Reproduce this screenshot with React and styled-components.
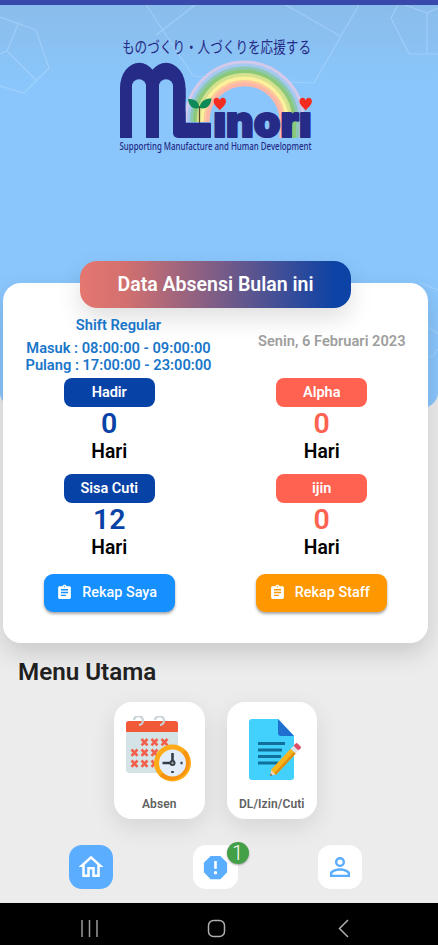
import React from "react";
import styled, { createGlobalStyle } from "styled-components";
import { MdAssignment, MdOutlineHome, MdReport, MdPersonOutline } from "react-icons/md";

const GlobalStyle = createGlobalStyle`
  *, *::before, *::after { box-sizing: border-box; }
  body { margin: 0; background: #ececec; font-family: Roboto, "Noto Sans CJK JP", sans-serif; }
  svg { display: block; flex: none; }
`;

const Screen = styled.div`
  position: relative;
  width: 438px;
  height: 945px;
  overflow: hidden;
  display: flex;
  flex-direction: column;
  background: #ececec;
`;

const StatusBar = styled.div`
  height: 5px;
  flex: none;
  background: #3949ab;
  z-index: 1;
`;

const Backdrop = styled.div`
  position: absolute;
  inset: 0 0 auto 0;
  height: 409px;
  overflow: hidden;
  border-radius: 0 0 20px 20px / 0 0 16px 16px;
  background: linear-gradient(#8abcea 0, #8ac0f0 35px, #8ac6fb 80px, #8ac6fd 100%);
`;

const Hero = styled.header`
  height: 256px;
  flex: none;
  padding: 25px 0 0 106px;
  z-index: 1;
`;

const LogoArt = styled.svg`
  overflow: visible;
`;

const SummaryCard = styled.section`
  z-index: 1;
  flex: none;
  width: 425px;
  height: 360px;
  margin: 22px 0 0 3px;
  border-radius: 18px;
  background: #fff;
  box-shadow: 0 10px 24px rgba(0, 0, 0, 0.15);
  display: flex;
  flex-direction: column;
`;

const Title = styled.h1`
  margin: -22px 0 0 77px;
  width: 271px;
  height: 47px;
  flex: none;
  border-radius: 17px;
  display: flex;
  align-items: center;
  justify-content: center;
  color: #fff;
  font-size: 19.5px;
  font-weight: 600;
  background: linear-gradient(90deg, #e57770 0%, #d2706f 17%, #0d43a5 94%);
  box-shadow: 0 10px 24px rgba(0, 0, 0, 0.13);
`;

const ShiftRow = styled.div`
  height: 70px;
  display: grid;
  grid-template-columns: 212.5px 212.5px;
  font-weight: 600;
  font-size: 14.65px;
`;

const Shift = styled.div`
  padding: 9px 0 0 17px;
  width: 214px;
  color: #1976c9;
  line-height: 16.5px;
  text-align: center;
  white-space: nowrap;
`;

const ShiftName = styled.div`
  margin-bottom: 6.5px;
`;

const Today = styled.div`
  padding-top: 25px;
  padding-left: 42.5px;
  color: #9e9e9e;
  line-height: 17px;
  white-space: nowrap;
`;

const Stats = styled.div`
  display: grid;
  grid-template-columns: 1fr 1fr;
  grid-auto-rows: 95.5px;
`;

const StatBox = styled.div`
  display: flex;
  flex-direction: column;
  align-items: center;
`;

const StatLabel = styled.div`
  width: 91px;
  height: 29px;
  border-radius: 8px;
  display: flex;
  align-items: center;
  justify-content: center;
  color: #fff;
  font-weight: 600;
  font-size: 14.5px;
  background: ${(p) => p.$color};
`;

const StatValue = styled.div`
  color: ${(p) => p.$color};
  font-weight: 600;
  font-size: 28.5px;
  line-height: 33px;
`;

const StatUnit = styled.div`
  color: #000;
  font-weight: 600;
  font-size: 19.3px;
  line-height: 24px;
`;

const Actions = styled.div`
  display: grid;
  grid-template-columns: 1fr 1fr;
  justify-items: center;
  padding-top: 4.5px;
`;

const ActionButton = styled.button`
  width: 131px;
  height: 38px;
  border: 0;
  border-radius: 9px;
  padding: 0 0 0 12.5px;
  display: flex;
  align-items: center;
  gap: 9px;
  color: #fff;
  font: 500 14.4px Roboto, sans-serif;
  white-space: nowrap;
  background: ${(p) => p.$color};
  box-shadow: 0 2px 3px rgba(0, 0, 0, 0.35);
`;

const MenuTitle = styled.h2`
  margin: 15px 0 0 18px;
  flex: none;
  height: 29px;
  line-height: 29px;
  color: #212121;
  font-size: 24.2px;
  font-weight: 600;
`;

const MenuRow = styled.div`
  display: flex;
  gap: 22px;
  padding: 15px 0 0 114px;
  height: 158px;
  flex: none;
`;

const MenuCard = styled.div`
  width: 90.5px;
  height: 116.5px;
  border-radius: 18px;
  padding-top: 14px;
  background: #fff;
  box-shadow: 0 8px 24px rgba(0, 0, 0, 0.1);
  display: flex;
  flex-direction: column;
  align-items: center;
  gap: 9px;
  color: #616161;
  font-size: 12px;
  font-weight: 600;
  line-height: 14px;
  letter-spacing: 0.1px;
  white-space: nowrap;
`;

const TabBar = styled.nav`
  height: 58px;
  flex: none;
  display: flex;
  gap: 80px;
  padding-left: 69px;
`;

const Tab = styled.div`
  position: relative;
  width: 44.3px;
  height: 44px;
  border-radius: 13px;
  display: flex;
  align-items: center;
  justify-content: center;
  color: ${(p) => (p.$active ? "#fff" : "#5badff")};
  background: ${(p) => (p.$active ? "#5badff" : "#fff")};
`;

const Badge = styled.span`
  position: absolute;
  top: -3px;
  right: -11px;
  width: 22px;
  height: 22px;
  border-radius: 50%;
  display: flex;
  align-items: center;
  justify-content: center;
  color: #fff;
  font-size: 20px;
  font-weight: 300;
  line-height: 21px;
  background: #43a047;
  box-shadow: 0 1px 2px rgba(0, 0, 0, 0.35);
`;

const SystemBar = styled.div`
  height: 42px;
  flex: none;
  background: #000;
  display: flex;
  align-items: center;
  padding: 8px 0 0 80px;
  gap: 107px;
`;

const NAVY = "#252b86";

function Pattern() {
  return (
    <svg width="438" height="409" fill="none" stroke="#b5dcff" strokeOpacity=".5" strokeWidth="1.2">
      <path d="M0 17L36 30L49 68L24 93L0 86M19 22L7 51L36 80M7 51L0 54" />
      <path d="M145 3L193 76L219 78M195 5L156 35" />
      <path d="M286 5L340 36M360 3L314 83L287 82" />
      <path d="M398 5L391 18L409 54H438M405 5L427 13L438 8M427 13V54" />
      <path d="M420 283L438 290M428 327L438 334M428 357L433 356L438 349" />
    </svg>
  );
}

function Heart({ x, y }) {
  return (
    <path
      transform={`translate(${x} ${y})`}
      d="M0 12.5C-1.5 10-6.2 7-6.2 3.200C-6.2 1-4.800-.3-3.100-.3C-1.500-.3-.4.8 0 2.300C.4.8 1.500-.3 3.100-.3C4.800-.3 6.200 1 6.200 3.200C6.200 7 1.500 10 0 12.500Z"
      fill="#f42c20"
    />
  );
}

function Logo() {
  const bands = [
    ["#d3c9ea", 58.5], ["#a5c9f0", 55.5], ["#8cc8b4", 52.5], ["#8bc878", 49.5],
    ["#d5e28c", 46], ["#fdf09a", 42.5], ["#ffc99a", 39], ["#fcb7a6", 36.8],
  ];
  return (
    <LogoArt width="220" height="134" viewBox="106 30 220 134">
      <defs>
        <clipPath id="sky"><path d="M186 56H305V138H270V122H186Z" /></clipPath>
        <mask id="counters">
          <rect x="116" y="56" width="100" height="90" fill="#fff" />
          <rect x="132" y="79.2" width="14" height="80" rx="7" fill="#000" />
          <rect x="159" y="79.2" width="14" height="80" rx="7" fill="#000" />
        </mask>
      </defs>
      <g clipPath="url(#sky)" fill="none" strokeWidth="3.8">
        {bands.map(([color, r]) => (
          <path key={r} stroke={color} d={`M${244.5 - r} 138V121A${r} ${r} 0 0 1 ${244.5 + r} 121V138`} />
        ))}
      </g>
      <g fill={NAVY}>
        <g mask="url(#counters)">
          <rect x="120" y="62.8" width="38.500" height="75.2" rx="19.2" ry="25" />
          <rect x="146.500" y="62.8" width="39" height="60" rx="19.500" ry="25" />
          <rect x="120" y="88" width="12" height="50" />
          <rect x="146" y="82" width="13" height="56" />
          <rect x="173" y="88" width="12.5" height="40" />
        </g>
        <rect x="173" y="108" width="12.5" height="30" rx="5" />
        <rect x="178" y="122.8" width="33" height="15.2" rx="1" />
      </g>
      <path d="M199.5 123V106" stroke="#5b4a2a" strokeWidth="1.2" />
      <path d="M199.3 108C191 110 188.5 104 188 99C194 98.5 199 101 199.3 108ZM199.7 108C208 110 211 104 211.5 98.5C205 98.5 200 101 199.7 108Z" fill="#0d8a55" />
      <text x="213.5" y="137" fontFamily="Inter, sans-serif" fontWeight="900" fontSize="43.5" fill={NAVY} stroke={NAVY} strokeWidth="2.2" strokeLinejoin="round" textLength="98" lengthAdjust="spacingAndGlyphs">ınorı</text>
      <Heart x={219.8} y={98} />
      <Heart x={305.7} y={98} />
      <text x="122" y="53" fontFamily="'Noto Sans CJK JP', sans-serif" fontSize="16" fill={NAVY} textLength="189" lengthAdjust="spacingAndGlyphs">ものづくり・人づくりを応援する</text>
      <text x="119.5" y="150" fontFamily="'Noto Sans', sans-serif" fontWeight="500" fontSize="9.8" fill={NAVY} textLength="192" lengthAdjust="spacingAndGlyphs">Supporting Manufacture and Human Development</text>
    </LogoArt>
  );
}

function CalendarArt() {
  const marks = [[31, 26], [41, 26], [51, 26], [21, 36.5], [31, 36.5], [41, 36.5], [21, 47.5], [31, 47.5], [41, 47.5]];
  return (
    <svg width="72" height="72" viewBox="0 0 72 72">
      <rect x="3" y="5" width="52" height="52" rx="3" fill="#d3e3e6" />
      <path d="M3 16V8Q3 5 6 5H52Q55 5 55 8V16Z" fill="#f15a38" />
      <g fill="none" stroke="#c8d2d7" strokeWidth="2.2">
        <path d="M11 4A4.5 4.5 0 1 1 16 9" />
        <path d="M32 4A4.5 4.5 0 1 1 37 9" />
      </g>
      <g stroke="#f2604c" strokeWidth="2.6">
        {marks.map(([x, y]) => (
          <path key={`${x}-${y}`} d={`M${x - 12.5} ${y - 3}l6 6.4m0-6.4l-6 6.4`} />
        ))}
      </g>
      <g transform="translate(49.5 47)">
        <circle r="18.5" fill="#ffab18" />
        <path d="M13-13A18.500 18.500 0 0 1-13 13Z" fill="#f7930f" />
        <circle r="13.5" fill="#e3edfa" />
        <path d="M0-10V0H-10M8 0h2M0 8v2" fill="none" stroke="#343f4b" strokeWidth="2.6" />
        <circle r="3" fill="#343f4b" />
        <circle r="1.2" fill="#a9a197" />
      </g>
    </svg>
  );
}

function DocumentArt() {
  return (
    <svg width="72" height="72" viewBox="-1 0 72 72">
      <path d="M15 3H41L57 20V61Q57 64 54 64H15Q12 64 12 61V6Q12 3 15 3Z" fill="#42d0fd" />
      <path d="M41 3L57 20H44Q41 20 41 17Z" fill="#1f6fd0" />
      <path d="M21 27.5H48M21 34H45M21 40.500H44M21 47H41" stroke="#116f9c" strokeWidth="3" />
      <g transform="translate(33 60) rotate(-47)">
        <path d="M0 0L6-3.500V3.500Z" fill="#f4d7ba" />
        <path d="M0 0L2.300-1.200V1.200Z" fill="#555" />
        <rect x="5" y="-3.5" width="29" height="7" fill="#f9b51b" />
        <rect x="5" y="1.2" width="29" height="2.3" fill="#df8d0b" />
        <rect x="34" y="-3.5" width="4" height="7" fill="#dce4e9" />
        <rect x="38" y="-3.5" width="4.5" height="7" rx="1.5" fill="#dd4e68" />
      </g>
    </svg>
  );
}

function Stat({ label, value, color }) {
  return (
    <StatBox>
      <StatLabel $color={color}>{label}</StatLabel>
      <StatValue $color={color}>{value}</StatValue>
      <StatUnit>Hari</StatUnit>
    </StatBox>
  );
}

const BLUE = "#0743a6";
const RED = "#ff6250";

export default function App() {
  return (
    <Screen>
      <GlobalStyle />
      <Backdrop><Pattern /></Backdrop>
      <StatusBar />
      <Hero><Logo /></Hero>
      <SummaryCard>
        <Title>Data Absensi Bulan ini</Title>
        <ShiftRow>
          <Shift>
            <ShiftName>Shift Regular</ShiftName>
            <div>Masuk : 08:00:00 - 09:00:00</div>
            <div>Pulang : 17:00:00 - 23:00:00</div>
          </Shift>
          <Today>Senin, 6 Februari 2023</Today>
        </ShiftRow>
        <Stats>
          <Stat label="Hadir" value="0" color={BLUE} />
          <Stat label="Alpha" value="0" color={RED} />
          <Stat label="Sisa Cuti" value="12" color={BLUE} />
          <Stat label="ijin" value="0" color={RED} />
        </Stats>
        <Actions>
          <ActionButton $color="#168fff"><MdAssignment size={17} />Rekap Saya</ActionButton>
          <ActionButton $color="#ff9800"><MdAssignment size={17} />Rekap Staff</ActionButton>
        </Actions>
      </SummaryCard>
      <MenuTitle>Menu Utama</MenuTitle>
      <MenuRow>
        <MenuCard><CalendarArt />Absen</MenuCard>
        <MenuCard><DocumentArt />DL/Izin/Cuti</MenuCard>
      </MenuRow>
      <TabBar>
        <Tab $active><MdOutlineHome size={30} /></Tab>
        <Tab><MdReport size={31} /><Badge>1</Badge></Tab>
        <Tab><MdPersonOutline size={30} /></Tab>
      </TabBar>
      <SystemBar>
        <svg width="20" height="20" stroke="#9a9a9a" strokeWidth="1.5"><path d="M2 2V19M9.5 2V19M17 2V19" /></svg>
        <svg width="20" height="20" fill="none" stroke="#b0b0b0" strokeWidth="1.5"><rect x="1.5" y="2.5" width="16" height="16" rx="5" /></svg>
        <svg width="20" height="20" fill="none" stroke="#b0b0b0" strokeWidth="1.5"><path d="M14 2L5.5 10.5L14 19" /></svg>
      </SystemBar>
    </Screen>
  );
}
